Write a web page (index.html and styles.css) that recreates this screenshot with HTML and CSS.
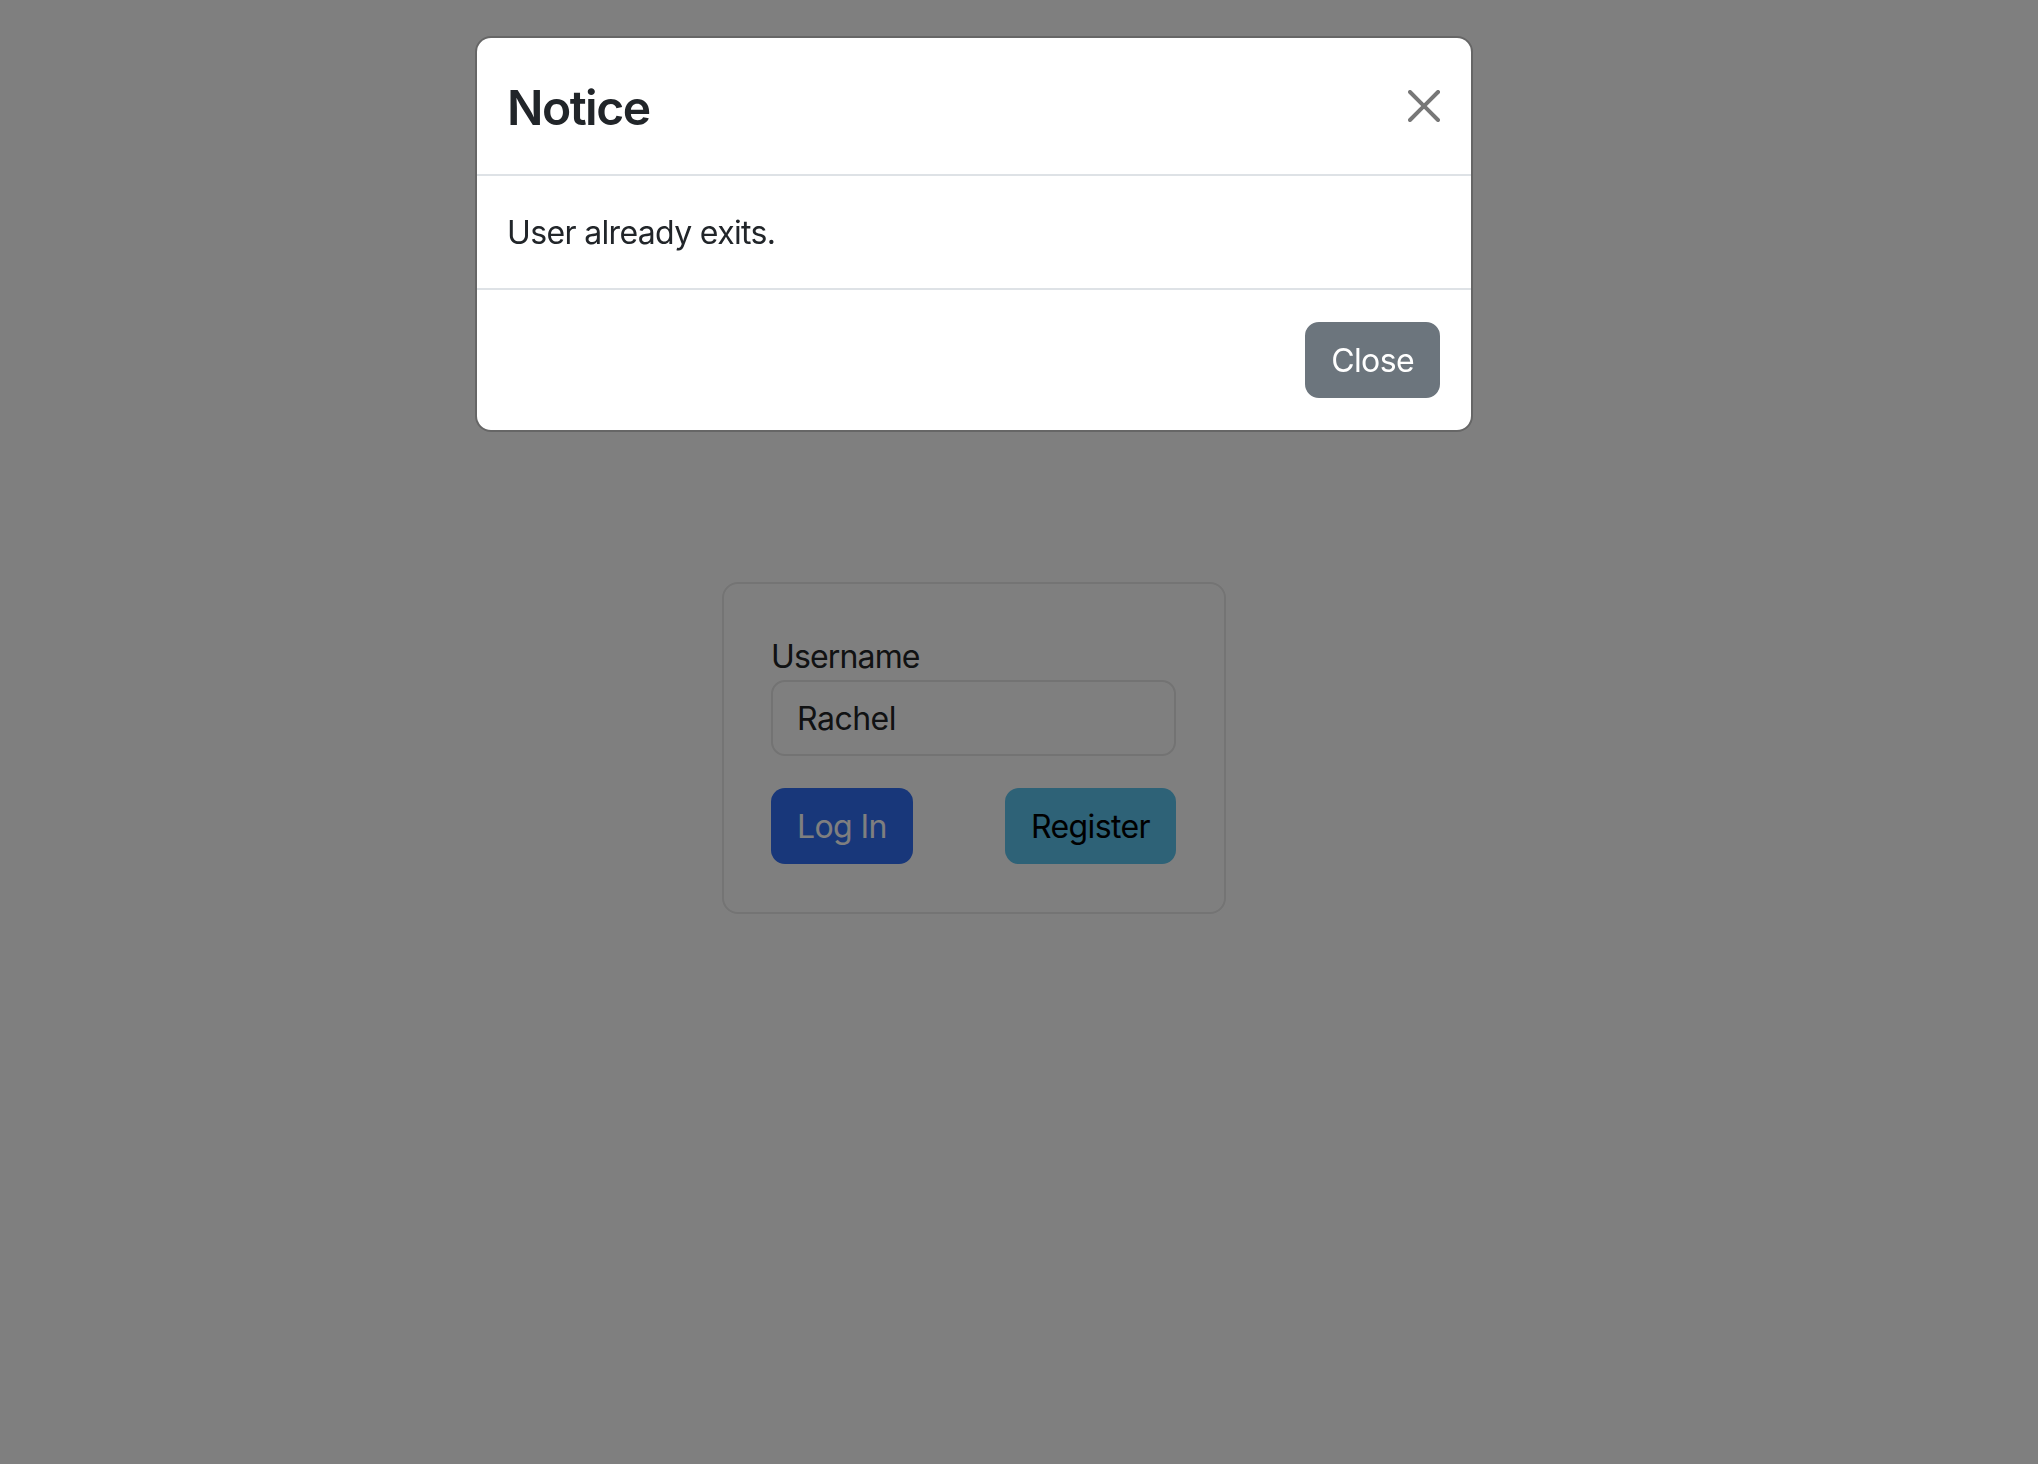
FILE: index.html
```html
<!DOCTYPE html>
<html lang="en">
<head>
<meta charset="utf-8">
<title>Login</title>
<link rel="stylesheet" href="styles.css">
</head>
<body>
<div class="page">
  <main class="login">
    <form class="login-card">
      <label class="field-label" for="username">Username</label>
      <input class="field-input" id="username" type="text" value="Rachel">
      <div class="actions">
        <button class="btn btn-login" type="button">Log In</button>
        <button class="btn btn-register" type="button">Register</button>
      </div>
    </form>
  </main>
</div>
<div class="backdrop"></div>
<div class="modal-layer">
  <div class="modal">
    <div class="modal-header">
      <h4 class="modal-title">Notice</h4>
      <button class="btn-close" type="button" aria-label="Close">
        <svg viewBox="0 0 16 16" width="32" height="32"><path d="M.293.293a1 1 0 0 1 1.414 0L8 6.586 14.293.293a1 1 0 1 1 1.414 1.414L9.414 8l6.293 6.293a1 1 0 0 1-1.414 1.414L8 9.414l-6.293 6.293a1 1 0 0 1-1.414-1.414L6.586 8 .293 1.707a1 1 0 0 1 0-1.414z"/></svg>
      </button>
    </div>
    <div class="modal-body">User already exits.</div>
    <div class="modal-footer">
      <button class="btn btn-secondary" type="button">Close</button>
    </div>
  </div>
</div>
</body>
</html>
```

FILE: styles.css
```css
* { box-sizing: border-box; }

html, body {
  margin: 0;
  padding: 0;
  background: #ffffff;
  font-family: "Inter", "Roboto", "Liberation Sans", sans-serif;
  color: #212529;
}

.page {
  width: 1948px;
  min-height: 1464px;
  padding-top: 582px;
}

.login {
  display: flex;
  justify-content: center;
}

.login-card {
  width: 504px;
  border: 2px solid #e8e8e8;
  border-radius: 16px;
  padding: 48px 48px 48px 47px;
  display: flex;
  flex-direction: column;
}

.field-label {
  font-size: 32px;
  line-height: 48px;
  padding-top: 1px;
  margin-bottom: -1px;
  color: #222426;
  letter-spacing: -0.85px;
}

.field-input {
  height: 76px;
  margin: 0;
  padding: 12px 24px;
  border: 2px solid #e6e6e6;
  border-radius: 14px;
  font: inherit;
  font-size: 32px;
  line-height: 48px;
  color: #222426;
  letter-spacing: -0.5px;
  background: #fff;
}

.actions {
  display: flex;
  justify-content: space-between;
  margin-top: 32px;
}

.btn {
  font-family: inherit;
  font-size: 32px;
  line-height: 48px;
  padding: 13px 24px 11px;
  border: 2px solid transparent;
  border-radius: 14px;
  letter-spacing: -0.6px;
  cursor: pointer;
}

.btn-login {
  background: #306ef4;
  color: #ffffff;
}

.btn-register {
  background: #5cc4ee;
  color: #000000;
}

.btn-secondary {
  background: #6c757d;
  color: #ffffff;
  border-color: #6c757d;
}

.backdrop {
  position: fixed;
  inset: 0;
  background: rgba(0, 0, 0, 0.5);
}

.modal-layer {
  position: fixed;
  top: 0;
  left: 0;
  width: 1948px;
  padding-top: 36px;
}

.modal {
  width: 998px;
  margin: 0 auto;
  background: #ffffff;
  border: 2px solid rgba(0, 0, 0, 0.2);
  background-clip: padding-box;
  border-radius: 16px;
}

.modal-header {
  display: flex;
  align-items: center;
  justify-content: space-between;
  padding: 32px 31px 32px 30px;
  border-bottom: 2px solid #dee2e6;
}

.modal-title {
  margin: 0;
  padding-top: 2px;
  margin-bottom: -2px;
  font-size: 48px;
  line-height: 72px;
  font-weight: 600;
  color: #212529;
  letter-spacing: -1.5px;
}

.btn-close {
  display: flex;
  width: 32px;
  height: 32px;
  padding: 0;
  border: 0;
  background: transparent;
  cursor: pointer;
}

.btn-close svg {
  fill: #000;
  opacity: 0.53;
}

.modal-body {
  padding: 33px 30px 31px;
  font-size: 32px;
  line-height: 48px;
  color: #212529;
  letter-spacing: -0.65px;
  border-bottom: 2px solid #dee2e6;
}

.modal-footer {
  display: flex;
  justify-content: flex-end;
  padding: 32px 31px 32px;
}
```
